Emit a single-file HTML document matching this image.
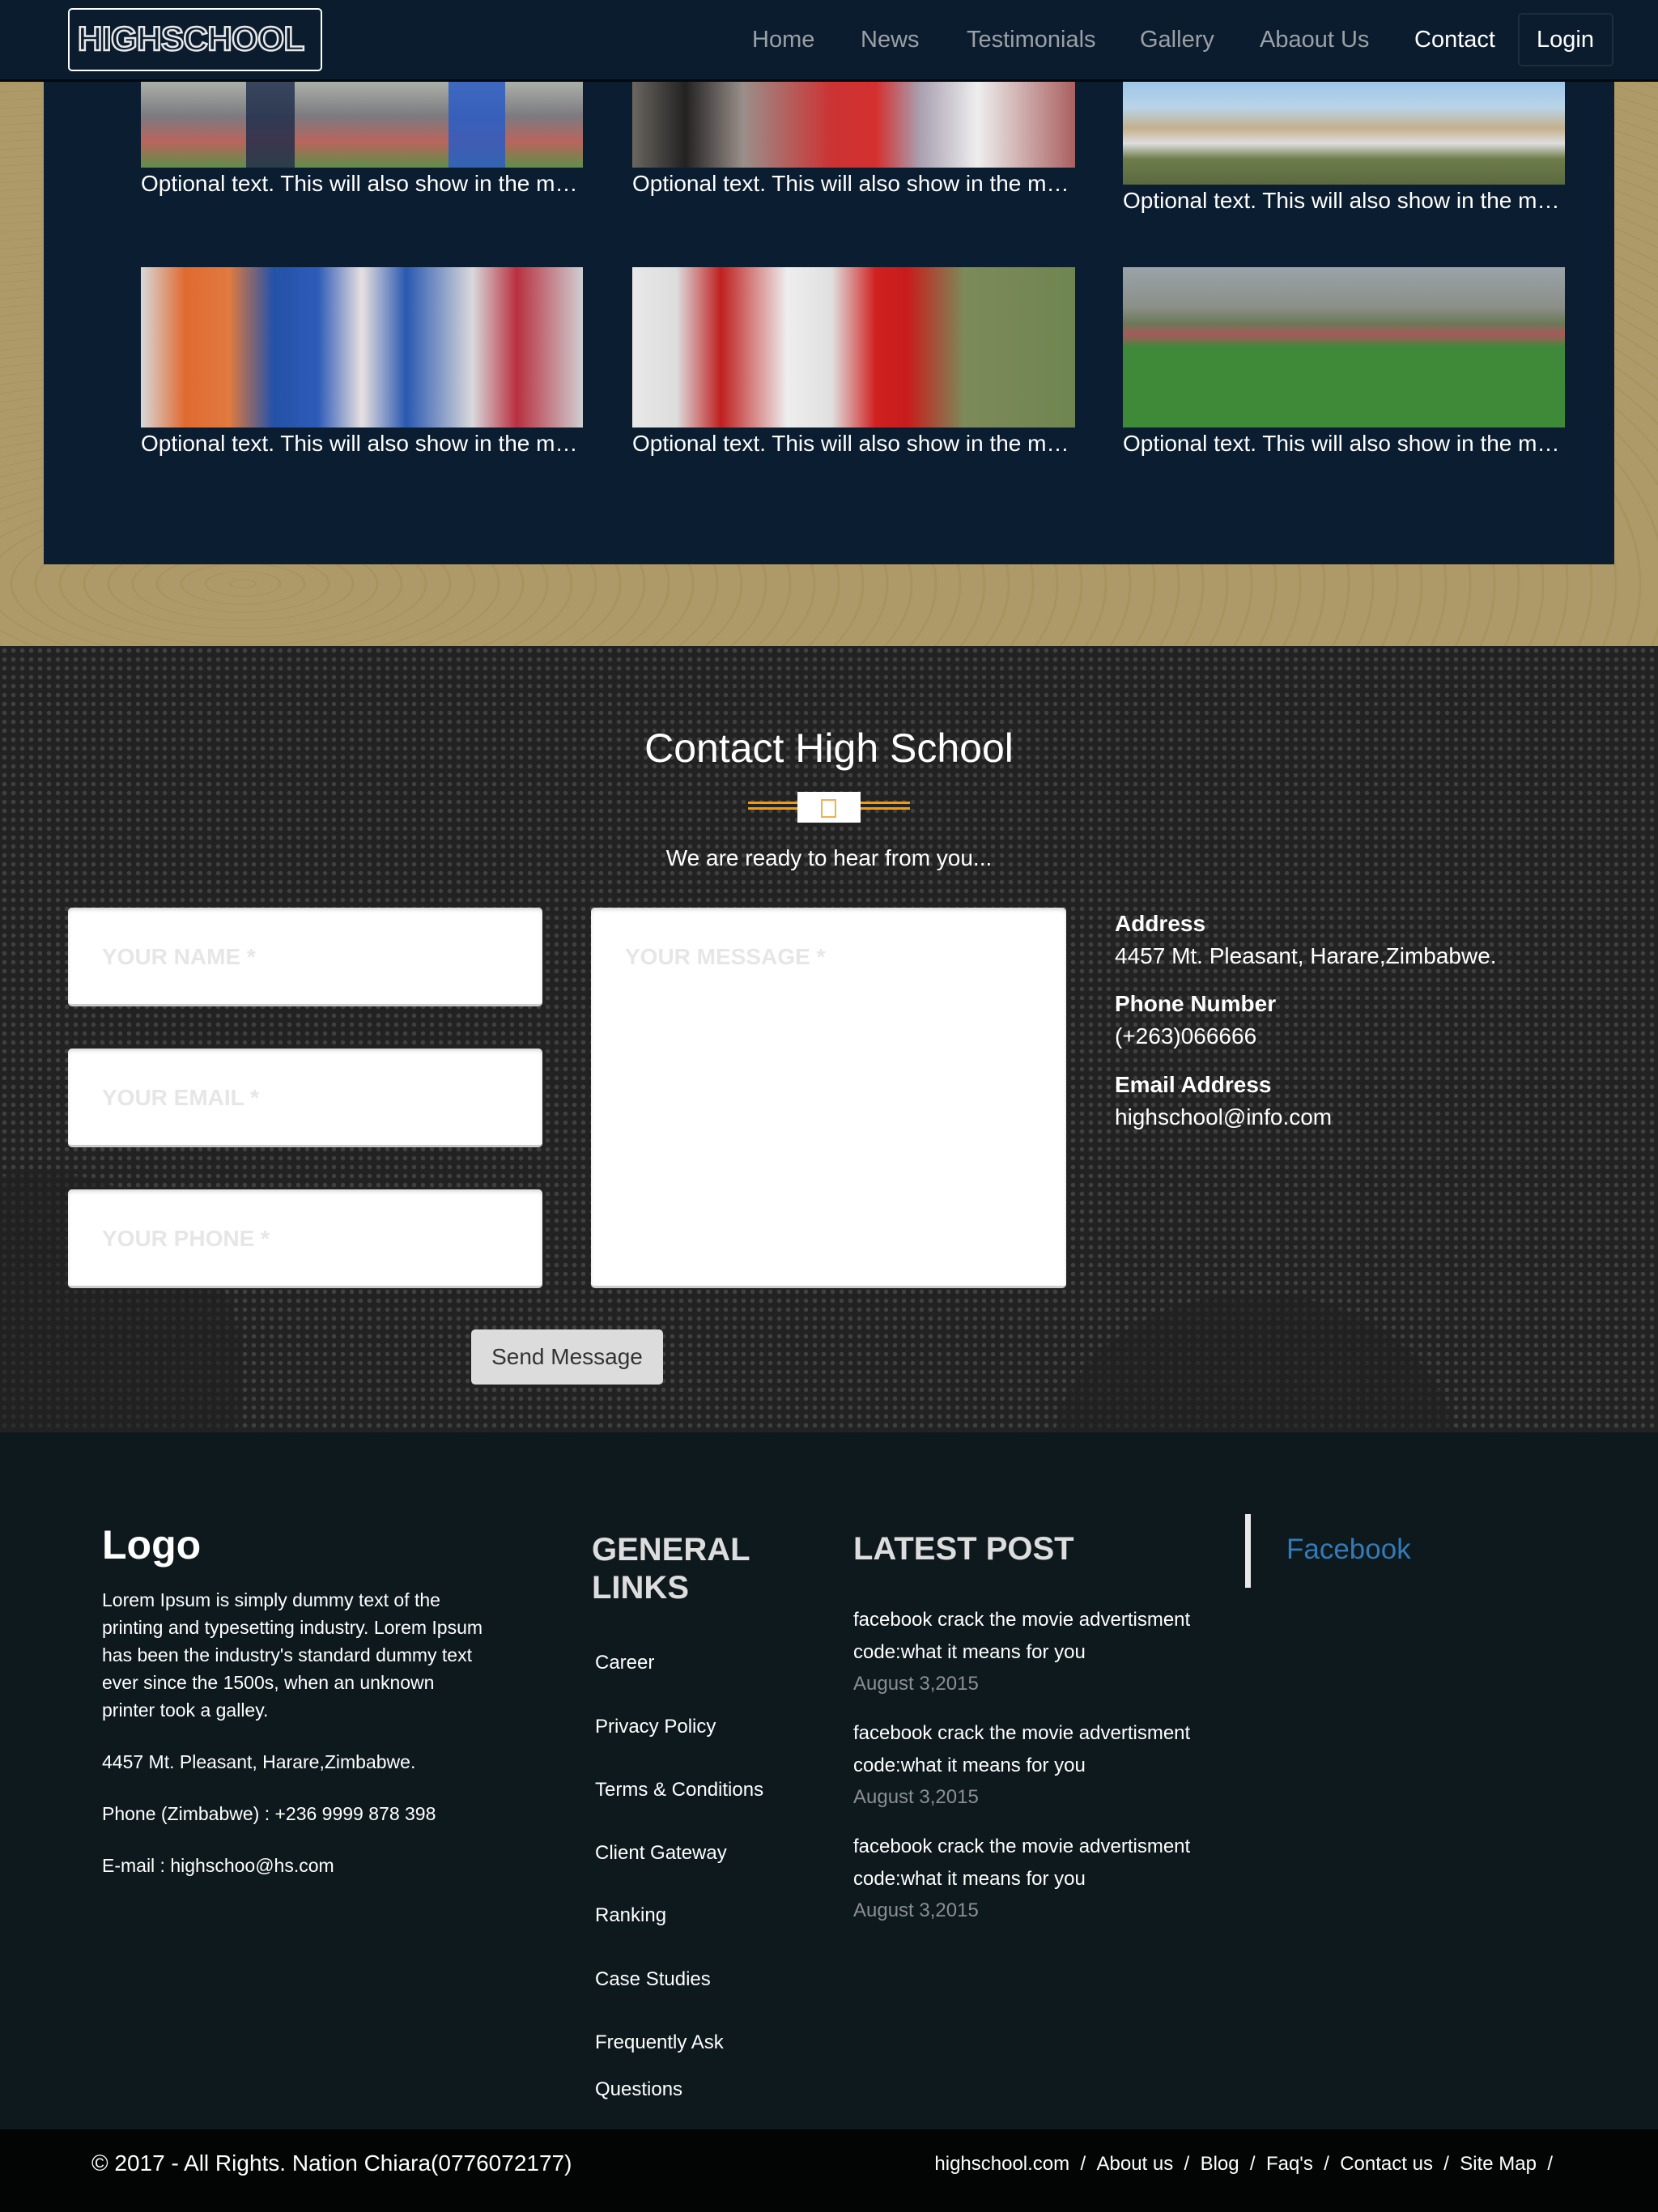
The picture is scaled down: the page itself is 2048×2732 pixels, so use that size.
<!DOCTYPE html>
<html><head><meta charset="utf-8"><style>
*{margin:0;padding:0;box-sizing:border-box}
body{width:2048px;height:2732px;position:relative;overflow:hidden;font-family:"Liberation Sans",Arial,sans-serif;background:#ae9a68}
.a{position:absolute;white-space:nowrap}
#nav{position:absolute;left:0;top:0;width:2048px;height:101px;background:#0b1c2e;border-bottom:3px solid #05080c}
.nl{position:absolute;top:33px;font-size:29px;color:#9aa0a6}
#wood{position:absolute;left:0;top:101px;width:2048px;height:697px;background:
 repeating-radial-gradient(ellipse 180px 60px at 300px 620px,#ae9a68 0 14px,#a8935f 15px 17px,#ae9a68 18px 30px),#ae9a68}
#panel{position:absolute;left:54px;top:101px;width:1940px;height:596px;background:#0b1d30}
.img{position:absolute}
.cap{position:absolute;font-size:28px;color:#fff}
#contact{position:absolute;left:0;top:798px;width:2048px;height:971px;background:#222;overflow:hidden}
#dots{position:absolute;inset:0;background-image:radial-gradient(circle,#4a4a4a 2.5px,transparent 3px);background-size:11px 11px;opacity:.75}
.mask{position:absolute;background:#222;border-radius:50%}
.inp{position:absolute;background:#fff;border-radius:5px;border-bottom:3px solid #ccc;box-shadow:inset 0 3px 4px #ddd}
.ph{position:absolute;left:42px;top:45px;font-size:28px;font-weight:bold;color:#e6e6e6}
.lb{font-size:28px;font-weight:bold;color:#fff}
.vl{font-size:28px;color:#fff}
#footer{position:absolute;left:0;top:1769px;width:2048px;height:861px;background:#0e191e}
#bottom{position:absolute;left:0;top:2630px;width:2048px;height:102px;background:#030404}
.ft{font-size:23px;color:#fff}
.fl{position:absolute;left:735px;font-size:24px;color:#fff}
.pp{position:absolute;left:1054px;font-size:24px;color:#fff}
.pd{position:absolute;left:1054px;font-size:24px;color:#8a8f92}
</style></head><body>
<div id="wood"></div>
<div id="panel">
 <div class="img" style="left:120px;top:0;width:546px;height:106px;background:linear-gradient(180deg,#aab0a8 0%,#7d7a80 40%,#b8655c 70%,#5e8f4a 100%)"></div>
 <div class="img" style="left:250px;top:0;width:60px;height:106px;background:#1d2a4a;opacity:.8"></div>
 <div class="img" style="left:500px;top:0;width:70px;height:106px;background:#2b5cc4;opacity:.85"></div>
 <div class="img" style="left:727px;top:0;width:547px;height:106px;background:linear-gradient(90deg,#6a6660,#222 12%,#9a8f8a 25%,#c33 45%,#d43030 55%,#a9a0b0 65%,#eee 78%,#aa6060 100%)"></div>
 <div class="img" style="left:1333px;top:0;width:546px;height:127px;background:linear-gradient(180deg,#9ec6e8 0%,#b9d4e8 25%,#c4b08c 45%,#dedede 60%,#6f7c4a 75%,#5a6a40 100%)"></div>
 <div class="cap" style="left:120px;top:110px">Optional text. This will also show in the m…</div>
 <div class="cap" style="left:727px;top:110px">Optional text. This will also show in the m…</div>
 <div class="cap" style="left:1333px;top:131px">Optional text. This will also show in the m…</div>
 <div class="img" style="left:120px;top:229px;width:546px;height:198px;background:linear-gradient(90deg,#d8d8da,#e06a30 10%,#e07a40 20%,#2452a8 30%,#2d5bb8 40%,#e8e0e0 50%,#2a58b0 60%,#d9d9dc 75%,#b93040 85%,#cfcfd2 100%)"></div>
 <div class="img" style="left:727px;top:229px;width:547px;height:198px;background:linear-gradient(90deg,#e8e8e8,#ddd 10%,#c02020 20%,#eee 35%,#e0e0e0 45%,#d02020 55%,#c81c1c 62%,#7d8a5a 75%,#6f8550 100%)"></div>
 <div class="img" style="left:1333px;top:229px;width:546px;height:198px;background:linear-gradient(180deg,#9aa3a8 0%,#8b8f88 25%,#6b7a58 35%,#a8585a 42%,#3f8a3a 50%,#3d8a37 100%)"></div>
 <div class="cap" style="left:120px;top:431px">Optional text. This will also show in the m…</div>
 <div class="cap" style="left:727px;top:431px">Optional text. This will also show in the m…</div>
 <div class="cap" style="left:1333px;top:431px">Optional text. This will also show in the m…</div>
</div>
<div id="nav">
 <div class="a" style="left:84px;top:10px;width:314px;height:78px;border:2px solid #fff;border-radius:5px"></div>
 <div class="a" style="left:96px;top:24px;font-size:42px;font-weight:bold;color:#0b1c2e;-webkit-text-stroke:2.5px #e8e8e8;letter-spacing:-0.5px">HIGHSCHOOL</div>
 <div class="nl" style="left:929px">Home</div>
 <div class="nl" style="left:1063px">News</div>
 <div class="nl" style="left:1194px">Testimonials</div>
 <div class="nl" style="left:1408px">Gallery</div>
 <div class="nl" style="left:1556px">Abaout Us</div>
 <div class="nl" style="left:1747px;color:#fff">Contact</div>
 <div class="a" style="left:1875px;top:16px;width:118px;height:66px;border:2px solid #1f2d3c;border-radius:5px"></div>
 <div class="nl" style="left:1898px;color:#fff">Login</div>
</div>
<div id="contact">
 <div id="dots"></div>
 <div class="mask" style="left:-200px;top:650px;width:500px;height:500px;opacity:.6"></div>
 <div class="mask" style="left:1300px;top:800px;width:500px;height:400px;opacity:.6"></div>
 <div class="a" style="left:0;width:2048px;top:97px;text-align:center;font-size:50px;color:#fff">Contact High School</div>
 <div class="a" style="left:924px;top:192px;width:200px;height:3px;background:#f39c12"></div>
 <div class="a" style="left:924px;top:199px;width:200px;height:3px;background:#f39c12"></div>
 <div class="a" style="left:985px;top:180px;width:78px;height:38px;background:#fff"></div>
 <div class="a" style="left:1014px;top:189px;width:19px;height:23px;border:2px solid #f0b050"></div>
 <div class="a" style="left:0;width:2048px;top:246px;text-align:center;font-size:28px;color:#fff">We are ready to hear from you...</div>
 <div class="inp" style="left:84px;top:323px;width:586px;height:122px"><div class="ph">YOUR NAME *</div></div>
 <div class="inp" style="left:84px;top:497px;width:586px;height:122px"><div class="ph">YOUR EMAIL *</div></div>
 <div class="inp" style="left:84px;top:671px;width:586px;height:122px"><div class="ph">YOUR PHONE *</div></div>
 <div class="inp" style="left:730px;top:323px;width:587px;height:470px"><div class="ph">YOUR MESSAGE *</div></div>
 <div class="a" style="left:582px;top:844px;width:237px;height:68px;background:#dcdcdc;border-radius:5px;font-size:28px;color:#333;text-align:center;line-height:68px">Send Message</div>
 <div class="a lb" style="left:1377px;top:327px">Address</div>
 <div class="a vl" style="left:1377px;top:367px">4457 Mt. Pleasant, Harare,Zimbabwe.</div>
 <div class="a lb" style="left:1377px;top:426px">Phone Number</div>
 <div class="a vl" style="left:1377px;top:466px">(+263)066666</div>
 <div class="a lb" style="left:1377px;top:526px">Email Address</div>
 <div class="a vl" style="left:1377px;top:566px">highschool@info.com</div>
</div>
<div id="footer">
 <div class="a" style="left:126px;top:110px;font-size:50px;font-weight:bold;color:#fff">Logo</div>
 <div class="a ft" style="left:126px;top:190px;line-height:34px;white-space:normal;width:480px">Lorem Ipsum is simply dummy text of the printing and typesetting industry. Lorem Ipsum has been the industry's standard dummy text ever since the 1500s, when an unknown printer took a galley.</div>
 <div class="a ft" style="left:126px;top:394px">4457 Mt. Pleasant, Harare,Zimbabwe.</div>
 <div class="a ft" style="left:126px;top:458px">Phone (Zimbabwe) : +236 9999 878 398</div>
 <div class="a ft" style="left:126px;top:522px">E-mail : highschoo@hs.com</div>
 <div class="a" style="left:731px;top:122px;font-size:40px;font-weight:bold;color:#ddd;line-height:47px">GENERAL<br>LINKS</div>
 <div class="fl" style="top:271px">Career</div>
 <div class="fl" style="top:350px">Privacy Policy</div>
 <div class="fl" style="top:428px">Terms &amp; Conditions</div>
 <div class="fl" style="top:506px">Client Gateway</div>
 <div class="fl" style="top:583px">Ranking</div>
 <div class="fl" style="top:662px">Case Studies</div>
 <div class="fl" style="top:740px">Frequently Ask</div>
 <div class="fl" style="top:798px">Questions</div>
 <div class="a" style="left:1054px;top:122px;font-size:40px;font-weight:bold;color:#ddd">LATEST POST</div>
 <div class="pp" style="top:218px">facebook crack the movie advertisment</div>
 <div class="pp" style="top:258px">code:what it means for you</div>
 <div class="pd" style="top:297px">August 3,2015</div>
 <div class="pp" style="top:358px">facebook crack the movie advertisment</div>
 <div class="pp" style="top:398px">code:what it means for you</div>
 <div class="pd" style="top:437px">August 3,2015</div>
 <div class="pp" style="top:498px">facebook crack the movie advertisment</div>
 <div class="pp" style="top:538px">code:what it means for you</div>
 <div class="pd" style="top:577px">August 3,2015</div>
 <div class="a" style="left:1538px;top:101px;width:7px;height:91px;background:#e8e8e8"></div>
 <div class="a" style="left:1589px;top:125px;font-size:35px;color:#337ab7">Facebook</div>
</div>
<div id="bottom">
 <div class="a" style="left:113px;top:26px;font-size:28px;color:#fff">© 2017 - All Rights. Nation Chiara(0776072177)</div>
 <div class="a" style="right:130px;top:29px;font-size:24px;color:#fff">highschool.com &nbsp;/ &nbsp;About us &nbsp;/ &nbsp;Blog &nbsp;/ &nbsp;Faq's &nbsp;/ &nbsp;Contact us &nbsp;/ &nbsp;Site Map &nbsp;/</div>
</div>
</body></html>
